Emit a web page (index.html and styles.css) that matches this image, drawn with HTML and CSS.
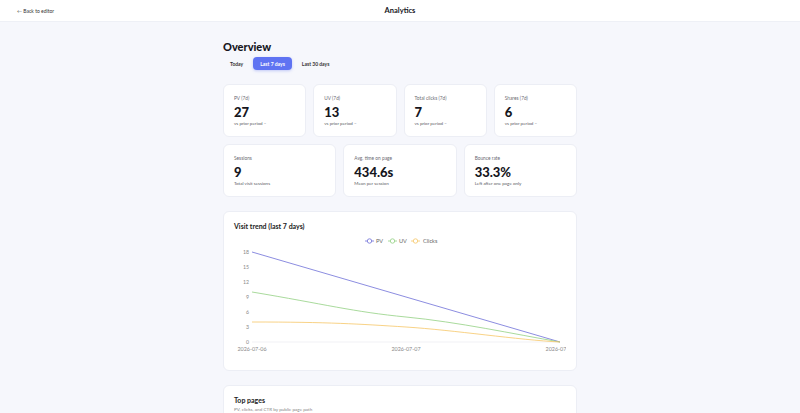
FILE: index.html
```html
<!DOCTYPE html>
<html lang="en">
<head>
  <meta charset="UTF-8">
  <meta name="viewport" content="width=device-width, initial-scale=1.0">
  <title>Analytics</title>
  <link rel="stylesheet" href="styles.css">
</head>
<body>
  <header class="topbar">
    <a class="back-link" href="#">&larr; Back to editor</a>
    <h1 class="topbar-title">Analytics</h1>
    <span class="topbar-spacer"></span>
  </header>

  <main class="page">
    <h2 class="page-title">Overview</h2>

    <nav class="range-tabs">
      <button class="range-tab">Today</button>
      <button class="range-tab active">Last 7 days</button>
      <button class="range-tab">Last 30 days</button>
    </nav>

    <section class="stat-grid four">
      <div class="stat-card">
        <div class="stat-label">PV (7d)</div>
        <div class="stat-value">27</div>
        <div class="stat-note">vs prior period &ndash;</div>
      </div>
      <div class="stat-card">
        <div class="stat-label">UV (7d)</div>
        <div class="stat-value">13</div>
        <div class="stat-note">vs prior period &ndash;</div>
      </div>
      <div class="stat-card">
        <div class="stat-label">Total clicks (7d)</div>
        <div class="stat-value">7</div>
        <div class="stat-note">vs prior period &ndash;</div>
      </div>
      <div class="stat-card">
        <div class="stat-label">Shares (7d)</div>
        <div class="stat-value">6</div>
        <div class="stat-note">vs prior period &ndash;</div>
      </div>
    </section>

    <section class="stat-grid three">
      <div class="stat-card">
        <div class="stat-label">Sessions</div>
        <div class="stat-value">9</div>
        <div class="stat-note">Total visit sessions</div>
      </div>
      <div class="stat-card">
        <div class="stat-label">Avg. time on page</div>
        <div class="stat-value">434.6s</div>
        <div class="stat-note">Mean per session</div>
      </div>
      <div class="stat-card">
        <div class="stat-label">Bounce rate</div>
        <div class="stat-value">33.3%</div>
        <div class="stat-note">Left after one page only</div>
      </div>
    </section>

    <section class="panel chart-panel">
      <h3 class="panel-title">Visit trend (last 7 days)</h3>
      <svg class="trend-chart" viewBox="0 0 332 122" width="332" height="122">
        <!-- legend -->
        <g class="legend">
          <line x1="131" y1="7" x2="140" y2="7" stroke="#6f70d8" stroke-width="0.8"/>
          <circle cx="135.5" cy="7" r="2.2" fill="#fff" stroke="#6f70d8" stroke-width="0.8"/>
          <text x="142" y="8.8">PV</text>
          <line x1="154" y1="7" x2="163" y2="7" stroke="#93d183" stroke-width="0.8"/>
          <circle cx="158.5" cy="7" r="2.2" fill="#fff" stroke="#93d183" stroke-width="0.8"/>
          <text x="165" y="8.8">UV</text>
          <line x1="177" y1="7" x2="186" y2="7" stroke="#f6c667" stroke-width="0.8"/>
          <circle cx="181.5" cy="7" r="2.2" fill="#fff" stroke="#f6c667" stroke-width="0.8"/>
          <text x="189" y="8.8">Clicks</text>
        </g>

        <!-- y axis -->
        <g class="axis-y">
          <text x="15" y="19.8">18</text>
          <text x="15" y="34.8">15</text>
          <text x="15" y="49.8">12</text>
          <text x="15" y="64.8">9</text>
          <text x="15" y="79.8">6</text>
          <text x="15" y="94.8">3</text>
          <text x="15" y="109.8">0</text>
        </g>
        <line x1="18" y1="108" x2="326" y2="108" stroke="#eeeef2" stroke-width="0.8"/>

        <g class="axis-x">
          <text x="18" y="117">2026-07-06</text>
          <text x="172" y="117">2026-07-07</text>
          <text x="322" y="117">2026-07</text>
        </g>

        <!-- series -->
        <path d="M18,18 L172,63 L326,108" fill="none" stroke="#6f70d8" stroke-width="0.8"/>
        <path d="M18,58 C90,70 120,78 172,83 S 280,100 326,108" fill="none" stroke="#93d183" stroke-width="0.8"/>
        <path d="M18,88 C95,88 125,90 172,93 S 285,106 326,108" fill="none" stroke="#f6c667" stroke-width="0.8"/>
      </svg>
    </section>

    <section class="panel">
      <h3 class="panel-title">Top pages</h3>
      <p class="panel-sub">PV, clicks, and CTR by public page path</p>
      <div class="table-space"></div>
    </section>
  </main>
</body>
</html>
```

FILE: styles.css
```css
body {
  margin: 0;
  background: #f6f7fc;
  font-family: Lato, "Noto Sans", sans-serif;
  color: #16161d;
}

.topbar {
  height: 22px;
  background: #fff;
  border-bottom: 1px solid #eef0f6;
  display: flex;
  align-items: center;
  justify-content: space-between;
  padding: 0 17px;
  box-sizing: border-box;
}

.back-link {
  font-size: 5px;
  color: #333;
  text-decoration: none;
  width: 60px;
}

.topbar-title {
  margin: 0;
  font-size: 7.5px;
  font-weight: 700;
}

.topbar-spacer {
  width: 60px;
}

.page {
  width: 354px;
  margin: 0 auto;
  padding-top: 18px;
}

.page-title {
  margin: 0;
  font-size: 11px;
  font-weight: 900;
  line-height: 13px;
}

.range-tabs {
  display: flex;
  gap: 3px;
  margin-top: 4px;
}

.range-tab {
  border: none;
  background: transparent;
  font-family: inherit;
  font-size: 5px;
  font-weight: 700;
  color: #333;
  height: 13px;
  padding: 0 7px;
  border-radius: 4px;
}

.range-tab.active {
  background: #5f73f2;
  color: #fff;
  box-shadow: 0 1px 3px rgba(95, 115, 242, 0.35);
}

.stat-grid {
  display: grid;
  gap: 7px;
  margin-top: 14px;
}

.stat-grid.four {
  grid-template-columns: repeat(4, 1fr);
}

.stat-grid.three {
  grid-template-columns: repeat(3, 1fr);
  margin-top: 7px;
}

.stat-card,
.panel {
  background: #fff;
  border: 1px solid #eceef5;
  border-radius: 6px;
  box-sizing: border-box;
}

.stat-card {
  height: 53px;
  padding: 10px 10px 0;
}

.stat-label {
  font-size: 4.8px;
  color: #6a6a72;
  line-height: 6px;
}

.stat-value {
  font-size: 13px;
  font-weight: 900;
  line-height: 15px;
  margin-top: 4px;
}

.stat-note {
  font-size: 4.5px;
  color: #5a5a62;
  line-height: 6px;
  margin-top: 1px;
}

.panel {
  margin-top: 14px;
  padding: 10px 10px 0;
}

.chart-panel {
  height: 160px;
}

.panel-title {
  margin: 0;
  font-size: 7px;
  font-weight: 700;
  color: #222;
  line-height: 9px;
}

.panel-sub {
  margin: 1px 0 0;
  font-size: 4.6px;
  color: #888;
}

.trend-chart {
  display: block;
  margin-top: 3px;
  font-family: Lato, sans-serif;
}

.legend text {
  font-size: 5.6px;
  fill: #666;
}

.axis-y text {
  font-size: 5.2px;
  fill: #888;
  text-anchor: end;
}

.axis-x text {
  font-size: 5.4px;
  fill: #888;
  text-anchor: middle;
}

.table-space {
  height: 40px;
}
```
